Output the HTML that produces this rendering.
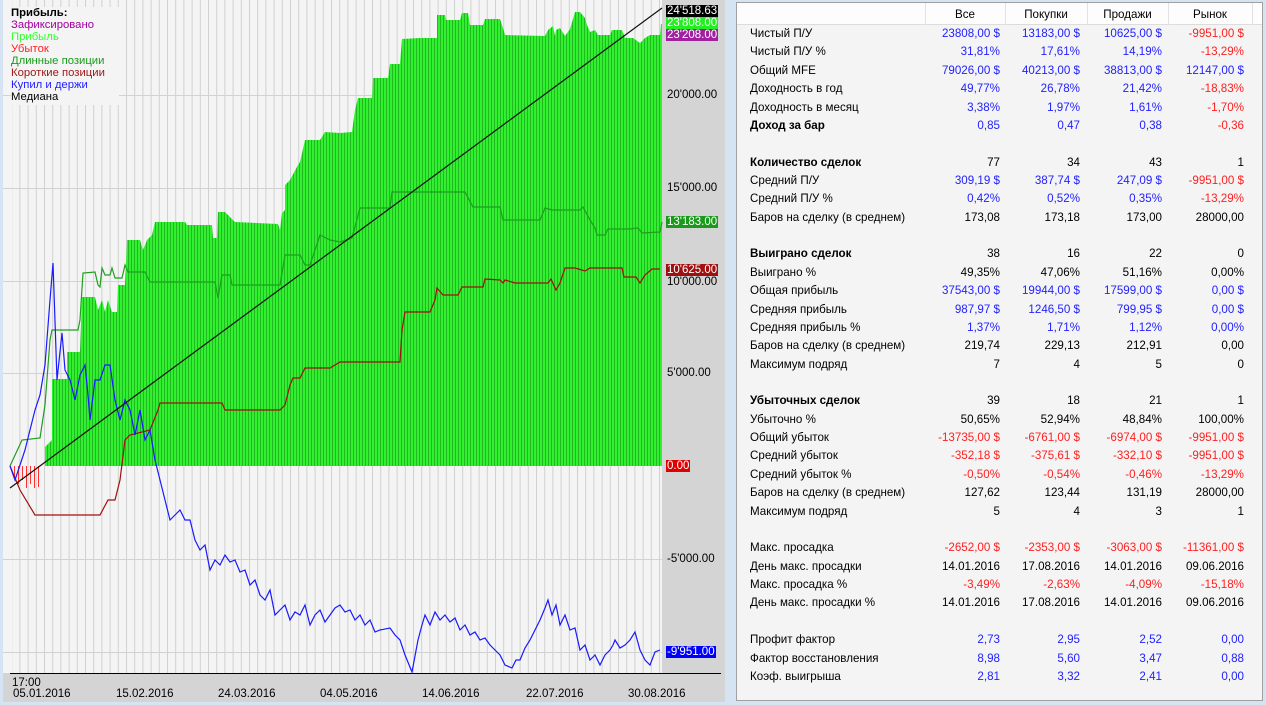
<!DOCTYPE html>
<html><head><meta charset="utf-8">
<style>
*{margin:0;padding:0;box-sizing:border-box}
body{width:1266px;height:705px;background:#d6e3f3;position:relative;overflow:hidden;font-family:"Liberation Sans","DejaVu Sans",sans-serif;font-size:11px}
#chart{position:absolute;left:3px;top:0;width:722px;height:702px;background:#f4f4f4}
#tbl{position:absolute;left:736px;top:2px;width:527px;height:699px;background:#f4f4f4;border:1px solid #a0a0a0;font-size:11.6px}
.hdr{position:absolute;left:0;top:0;width:525px;height:22px;background:#fdfdfd;border-bottom:1px solid #dcdcdc}
.hdr span{position:absolute;top:5px;text-align:center;color:#000}
.sep{position:absolute;top:0;width:1px;height:22px;background:#e2e2e2}
.row{position:absolute;left:0;width:525px;height:18px}
.row span{position:absolute;top:2px;white-space:nowrap}
.l{left:13px;color:#000}
.c1{right:262px}.c2{right:182px}.c3{right:100px}.c4{right:18px}
.b{color:#2222ff}.r{color:#ff2020}.k{color:#000}
.bold{font-weight:bold}
.ax{position:absolute;left:663px;font-size:11.5px;line-height:12px;padding:0 1px;white-space:nowrap}
.dt{position:absolute;top:688px;color:#000;font-size:11.5px}
</style></head><body>
<div id="chart">
<svg width="722" height="702" style="position:absolute;left:0;top:0" xmlns="http://www.w3.org/2000/svg">
<defs>
<pattern id="gp" width="3" height="10" patternUnits="userSpaceOnUse"><rect width="3" height="10" fill="#30f030"/><rect x="2" width="1" height="10" fill="#22b822"/></pattern>
<pattern id="vg" width="8.2" height="10" patternUnits="userSpaceOnUse"><rect x="0" width="1" height="10" fill="#d0d0d0"/></pattern>
</defs>
<rect x="0" y="0" width="659" height="673" fill="#f4f4f4"/>
<rect x="9" y="0" width="650" height="673" fill="url(#vg)"/>
<g stroke="#d2d2d2" stroke-width="1">
<line x1="0" y1="95.5" x2="659" y2="95.5"/><line x1="0" y1="188.5" x2="659" y2="188.5"/><line x1="0" y1="281.5" x2="659" y2="281.5"/><line x1="0" y1="373.5" x2="659" y2="373.5"/><line x1="0" y1="559.5" x2="659" y2="559.5"/><line x1="0" y1="652.5" x2="659" y2="652.5"/>
</g>
<rect x="659" y="0" width="63" height="673" fill="#d4d4d4"/>
<rect x="0" y="673" width="722" height="29" fill="#d4d4d4"/>
<line x1="7" y1="673.5" x2="718" y2="673.5" stroke="#000"/>
<g transform="translate(-3,0)">
<polygon fill="url(#gp)" points="45,466 45,447 52,440 52,379 67,379 67,352 80,352 82,297 95,297 98,310 102,300 105,312 108,300 112,312 117,312 118,285 125,285 127,240 140,240 143,250 147,240 152,235 155,222 185,222 187,225 212,225 213,238 217,238 218,212 225,212 228,215 235,222 278,224 280,230 282,213 285,210 285,185 290,180 298,165 300,162 305,140 320,140 325,132 340,133 352,132 355,110 358,98 372,98 373,78 388,78 390,64 400,64 402,39 420,38 437,38 437,15 445,15 446,20 460,20 462,13 468,13 470,25 483,25 485,19 500,19 503,28 505,35 545,36 548,30 553,26 555,36 556,30 560,28 565,36 570,29 575,12 580,12 585,18 587,25 590,32 595,30 598,35 610,35 612,30 622,30 625,38 633,38 640,43 645,38 650,35 660,35 661,24 662,24 662,466"/>
<g fill="#ff3030"><rect x="14" y="466" width="1" height="12"/><rect x="18" y="466" width="1" height="18"/><rect x="22" y="466" width="1" height="14"/><rect x="26" y="466" width="1" height="22"/><rect x="30" y="466" width="1" height="18"/><rect x="34" y="466" width="1" height="22"/><rect x="38" y="466" width="1" height="21"/></g>
<polyline fill="none" stroke="#1f9e1f" stroke-width="1.2" points="10,466 22,440 40,438 45,405 50,340 52,330 78,330 80,320 83,273 95,272 98,285 100,287 102,268 105,275 110,275 112,268 115,278 122,278 125,265 128,272 145,272 150,282 215,282 218,298 222,275 230,275 232,285 280,285 285,255 300,255 305,265 310,265 320,235 330,240 340,242 352,238 360,208 390,208 392,192 465,192 473,207 500,207 503,220 540,220 545,208 552,210 580,210 583,207 590,220 595,228 597,235 605,235 608,229 630,229 638,228 642,233 660,232 662,222"/>
<polyline fill="none" stroke="#a01010" stroke-width="1.2" points="10,466 20,490 35,515 100,515 108,500 115,500 120,480 125,440 130,435 150,430 158,410 160,403 222,403 225,410 280,410 285,405 290,385 293,378 300,378 305,368 330,368 340,362 400,362 402,330 405,312 430,312 435,300 437,288 443,295 458,295 462,287 483,287 485,279 500,280 503,283 505,280 515,283 548,283 551,279 556,290 560,283 565,268 575,268 585,271 590,268 622,268 624,277 636,277 640,283 645,275 652,269 660,269"/>
<polyline fill="none" stroke="#1a1aff" stroke-width="1.2" points="10,466 15,480 20,465 25,450 30,430 35,410 40,395 45,365 50,300 53,263 57,380 62,333 65,370 70,380 75,400 78,385 80,375 85,365 88,395 90,420 95,380 100,380 105,365 110,365 115,400 120,420 125,400 130,410 135,435 140,410 145,440 150,430 155,460 160,480 165,500 170,520 175,515 180,510 185,520 190,520 195,540 200,550 205,545 210,570 215,560 220,565 225,555 230,562 235,560 240,572 245,570 250,585 255,580 260,595 265,600 270,590 275,615 280,610 285,605 290,620 295,612 300,615 305,605 310,625 315,615 320,610 325,622 330,615 335,608 340,605 345,612 350,610 355,620 360,615 365,625 370,620 375,632 380,630 390,628 395,635 400,640 405,655 412,672 418,640 422,625 425,615 430,625 435,612 440,620 445,615 450,622 455,618 460,630 465,625 470,635 475,632 480,640 485,638 490,645 495,650 500,655 505,665 512,668 516,660 520,660 525,648 530,640 535,630 540,620 545,608 548,600 552,615 556,605 560,625 565,615 570,630 575,628 580,650 585,645 590,660 595,655 600,665 605,655 610,650 613,645 615,640 620,648 625,645 630,640 635,632 640,650 645,660 650,665 655,652 660,650"/>
<line x1="10" y1="488" x2="662" y2="8" stroke="#111" stroke-width="1.2"/>
</g>
</svg>
<div style="position:absolute;left:8px;top:7px;width:108px;height:98px;background:#f4f4f4;line-height:12px;font-size:11.3px">
<div style="font-weight:bold;color:#000">Прибыль:</div>
<div style="color:#a000a0">Зафиксировано</div>
<div style="color:#30ff30">Прибыль</div>
<div style="color:#ff2020">Убыток</div>
<div style="color:#1a9a1a">Длинные позиции</div>
<div style="color:#a01818">Короткие позиции</div>
<div style="color:#2020ff">Купил и держи</div>
<div style="color:#000">Медиана</div>
</div>
<div class="ax" style="top:5px;background:#000;color:#fff">24'518.63</div>
<div class="ax" style="top:17px;background:#22ee22;color:#fff">23'808.00</div>
<div class="ax" style="top:29px;background:#a020a0;color:#fff">23'208.00</div>
<div class="ax" style="top:89px;color:#000">20'000.00</div>
<div class="ax" style="top:182px;color:#000">15'000.00</div>
<div class="ax" style="top:216px;background:#1a9a1a;color:#fff">13'183.00</div>
<div class="ax" style="top:264px;background:#a01010;color:#fff">10'625.00</div>
<div class="ax" style="top:276px;color:#000">10'000.00</div>
<div class="ax" style="top:367px;color:#000">5'000.00</div>
<div class="ax" style="top:460px;background:#e00000;color:#fff">0.00</div>
<div class="ax" style="top:553px;color:#000">-5'000.00</div>
<div class="ax" style="top:646px;background:#0000ff;color:#fff">-9'951.00</div>
<div style="position:absolute;left:9px;top:677px;color:#000;font-size:11.5px">17:00</div>
<div class="dt" style="left:10px">05.01.2016</div>
<div class="dt" style="left:113px">15.02.2016</div>
<div class="dt" style="left:215px">24.03.2016</div>
<div class="dt" style="left:317px">04.05.2016</div>
<div class="dt" style="left:419px">14.06.2016</div>
<div class="dt" style="left:523px">22.07.2016</div>
<div class="dt" style="left:625px">30.08.2016</div>
</div>
<div id="tbl">
<div class="hdr">
<div class="sep" style="left:188px"></div><div class="sep" style="left:268px"></div><div class="sep" style="left:350px"></div><div class="sep" style="left:431px"></div><div class="sep" style="left:515px"></div>
<span style="left:188px;width:80px">Все</span><span style="left:268px;width:82px">Покупки</span><span style="left:350px;width:81px">Продажи</span><span style="left:431px;width:84px">Рынок</span>
</div>
<div class="row" style="top:22px"><span class="l">Чистый П/У</span><span class="c1 b">23808,00 $</span><span class="c2 b">13183,00 $</span><span class="c3 b">10625,00 $</span><span class="c4 r">-9951,00 $</span></div>
<div class="row" style="top:40.4px"><span class="l">Чистый П/У %</span><span class="c1 b">31,81%</span><span class="c2 b">17,61%</span><span class="c3 b">14,19%</span><span class="c4 r">-13,29%</span></div>
<div class="row" style="top:58.7px"><span class="l">Общий MFE</span><span class="c1 b">79026,00 $</span><span class="c2 b">40213,00 $</span><span class="c3 b">38813,00 $</span><span class="c4 b">12147,00 $</span></div>
<div class="row" style="top:77.1px"><span class="l">Доходность в год</span><span class="c1 b">49,77%</span><span class="c2 b">26,78%</span><span class="c3 b">21,42%</span><span class="c4 r">-18,83%</span></div>
<div class="row" style="top:95.5px"><span class="l">Доходность в месяц</span><span class="c1 b">3,38%</span><span class="c2 b">1,97%</span><span class="c3 b">1,61%</span><span class="c4 r">-1,70%</span></div>
<div class="row" style="top:113.8px"><span class="l bold">Доход за бар</span><span class="c1 b">0,85</span><span class="c2 b">0,47</span><span class="c3 b">0,38</span><span class="c4 r">-0,36</span></div>
<div class="row" style="top:150.6px"><span class="l bold">Количество сделок</span><span class="c1 k">77</span><span class="c2 k">34</span><span class="c3 k">43</span><span class="c4 k">1</span></div>
<div class="row" style="top:168.9px"><span class="l">Средний П/У</span><span class="c1 b">309,19 $</span><span class="c2 b">387,74 $</span><span class="c3 b">247,09 $</span><span class="c4 r">-9951,00 $</span></div>
<div class="row" style="top:187.3px"><span class="l">Средний П/У %</span><span class="c1 b">0,42%</span><span class="c2 b">0,52%</span><span class="c3 b">0,35%</span><span class="c4 r">-13,29%</span></div>
<div class="row" style="top:205.7px"><span class="l">Баров на сделку (в среднем)</span><span class="c1 k">173,08</span><span class="c2 k">173,18</span><span class="c3 k">173,00</span><span class="c4 k">28000,00</span></div>
<div class="row" style="top:242.4px"><span class="l bold">Выиграно сделок</span><span class="c1 k">38</span><span class="c2 k">16</span><span class="c3 k">22</span><span class="c4 k">0</span></div>
<div class="row" style="top:260.8px"><span class="l">Выиграно %</span><span class="c1 k">49,35%</span><span class="c2 k">47,06%</span><span class="c3 k">51,16%</span><span class="c4 k">0,00%</span></div>
<div class="row" style="top:279.1px"><span class="l">Общая прибыль</span><span class="c1 b">37543,00 $</span><span class="c2 b">19944,00 $</span><span class="c3 b">17599,00 $</span><span class="c4 b">0,00 $</span></div>
<div class="row" style="top:297.5px"><span class="l">Средняя прибыль</span><span class="c1 b">987,97 $</span><span class="c2 b">1246,50 $</span><span class="c3 b">799,95 $</span><span class="c4 b">0,00 $</span></div>
<div class="row" style="top:315.9px"><span class="l">Средняя прибыль %</span><span class="c1 b">1,37%</span><span class="c2 b">1,71%</span><span class="c3 b">1,12%</span><span class="c4 b">0,00%</span></div>
<div class="row" style="top:334.2px"><span class="l">Баров на сделку (в среднем)</span><span class="c1 k">219,74</span><span class="c2 k">229,13</span><span class="c3 k">212,91</span><span class="c4 k">0,00</span></div>
<div class="row" style="top:352.6px"><span class="l">Максимум подряд</span><span class="c1 k">7</span><span class="c2 k">4</span><span class="c3 k">5</span><span class="c4 k">0</span></div>
<div class="row" style="top:389.3px"><span class="l bold">Убыточных сделок</span><span class="c1 k">39</span><span class="c2 k">18</span><span class="c3 k">21</span><span class="c4 k">1</span></div>
<div class="row" style="top:407.7px"><span class="l">Убыточно %</span><span class="c1 k">50,65%</span><span class="c2 k">52,94%</span><span class="c3 k">48,84%</span><span class="c4 k">100,00%</span></div>
<div class="row" style="top:426.1px"><span class="l">Общий убыток</span><span class="c1 r">-13735,00 $</span><span class="c2 r">-6761,00 $</span><span class="c3 r">-6974,00 $</span><span class="c4 r">-9951,00 $</span></div>
<div class="row" style="top:444.4px"><span class="l">Средний убыток</span><span class="c1 r">-352,18 $</span><span class="c2 r">-375,61 $</span><span class="c3 r">-332,10 $</span><span class="c4 r">-9951,00 $</span></div>
<div class="row" style="top:462.8px"><span class="l">Средний убыток %</span><span class="c1 r">-0,50%</span><span class="c2 r">-0,54%</span><span class="c3 r">-0,46%</span><span class="c4 r">-13,29%</span></div>
<div class="row" style="top:481.2px"><span class="l">Баров на сделку (в среднем)</span><span class="c1 k">127,62</span><span class="c2 k">123,44</span><span class="c3 k">131,19</span><span class="c4 k">28000,00</span></div>
<div class="row" style="top:499.5px"><span class="l">Максимум подряд</span><span class="c1 k">5</span><span class="c2 k">4</span><span class="c3 k">3</span><span class="c4 k">1</span></div>
<div class="row" style="top:536.3px"><span class="l">Макс. просадка</span><span class="c1 r">-2652,00 $</span><span class="c2 r">-2353,00 $</span><span class="c3 r">-3063,00 $</span><span class="c4 r">-11361,00 $</span></div>
<div class="row" style="top:554.6px"><span class="l">День макс. просадки</span><span class="c1 k">14.01.2016</span><span class="c2 k">17.08.2016</span><span class="c3 k">14.01.2016</span><span class="c4 k">09.06.2016</span></div>
<div class="row" style="top:573px"><span class="l">Макс. просадка %</span><span class="c1 r">-3,49%</span><span class="c2 r">-2,63%</span><span class="c3 r">-4,09%</span><span class="c4 r">-15,18%</span></div>
<div class="row" style="top:591.4px"><span class="l">День макс. просадки %</span><span class="c1 k">14.01.2016</span><span class="c2 k">17.08.2016</span><span class="c3 k">14.01.2016</span><span class="c4 k">09.06.2016</span></div>
<div class="row" style="top:628.1px"><span class="l">Профит фактор</span><span class="c1 b">2,73</span><span class="c2 b">2,95</span><span class="c3 b">2,52</span><span class="c4 b">0,00</span></div>
<div class="row" style="top:646.5px"><span class="l">Фактор восстановления</span><span class="c1 b">8,98</span><span class="c2 b">5,60</span><span class="c3 b">3,47</span><span class="c4 b">0,88</span></div>
<div class="row" style="top:664.8px"><span class="l">Коэф. выигрыша</span><span class="c1 b">2,81</span><span class="c2 b">3,32</span><span class="c3 b">2,41</span><span class="c4 b">0,00</span></div>
</div>
</body></html>
